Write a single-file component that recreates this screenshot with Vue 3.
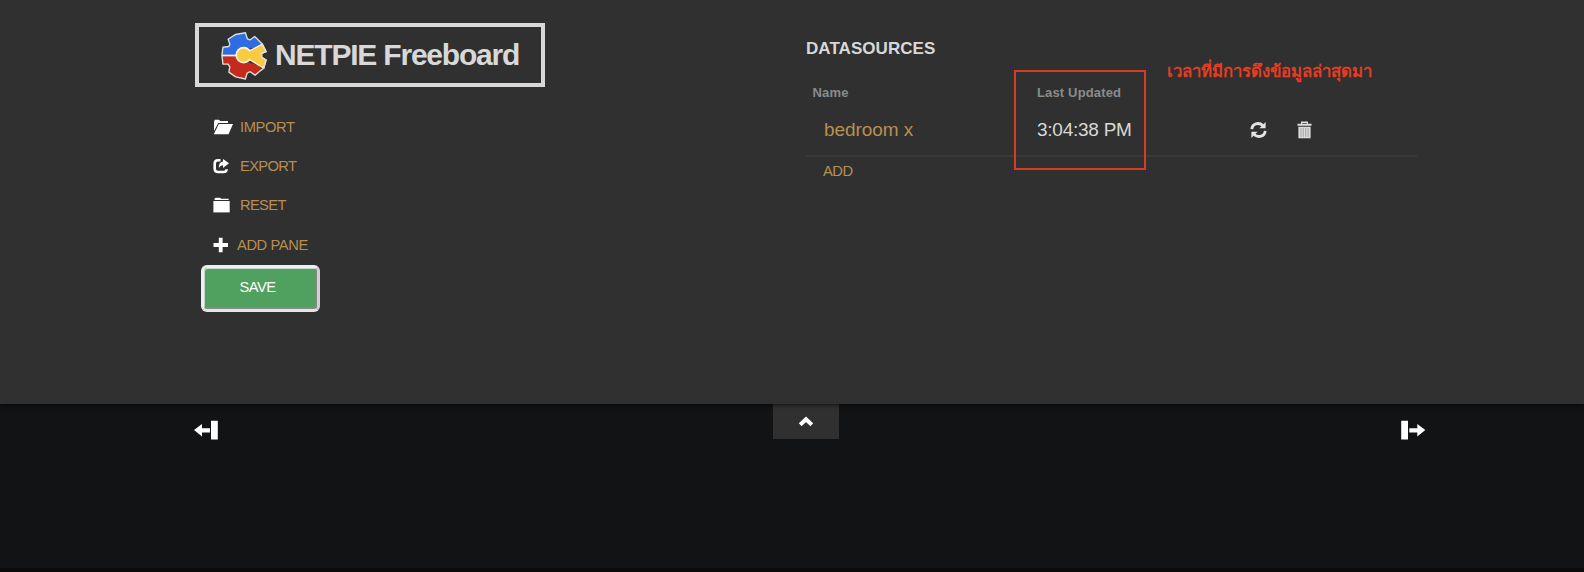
<script setup>
const menu = [
  { label: 'IMPORT', icon: 'open' },
  { label: 'EXPORT', icon: 'share' },
  { label: 'RESET', icon: 'folder' },
  { label: 'ADD PANE', icon: 'plus' },
]
</script>

<template>
  <div class="page">
    <header class="panel">
      <section class="left">
        <h1 class="logo">
          <svg class="gear" viewBox="35 19 138 142">
            <path d="M40 89L43 66L60 64L63 57L58 43L80 29L108 24L114 42L121 45L135 35L157 57L148 66L103 72V89Z" fill="#2c6ce4" />
            <path d="M40 91L43 115L58 115L63 123L60 138L80 152L108 158L113 141L122 137L136 147L155 130L146 118L103 106V91Z" fill="#c42b1e" />
            <path d="M40 90H84" stroke="#f3f3f5" stroke-width="5" />
            <circle cx="103" cy="89" r="24" fill="#fff6df" />
            <path d="M119 77L157 57L168 79L155 84V95L168 103L161 127L119 101Z" fill="#f9cb43" stroke="#fff6df" stroke-width="4" />
            <circle cx="103" cy="89" r="19" fill="#f9cb43" />
            <path d="M112 79L130 80V98L112 99Z" fill="#f9cb43" />
            <path class="rim" d="M40 89L43 66L60 64L63 57L58 43L80 29L108 24L114 42L121 45L135 35L157 57L168 79L155 84V95L168 103L161 127L153 133L136 147L122 137L113 141L108 158L80 152L60 138L63 123L58 115L43 115Z" />
          </svg>
          <span>NETPIE Freeboard</span>
        </h1>
        <ul class="menu">
          <li v-for="m in menu" :key="m.label" :class="m.icon">
            <svg class="ico" viewBox="0 0 20 16">
              <g v-if="m.icon === 'open'">
                <path d="M1 12V2.2L2 .8H6L7.2 2H15V4H5.2Z" />
                <path d="M5.8 5H20L15.5 15.3H.8Z" />
              </g>
              <g v-else-if="m.icon === 'share'">
                <path d="M7.5 2.2H5Q1.7 2.2 1.7 5.5V11Q1.7 14 5 14H10.5Q13.6 14 13.6 11.2" fill="none" stroke="#fff" stroke-width="2.6" />
                <path d="M10 1L16 5.3L10 10V7.3Q7.2 7.2 5.8 10Q5.7 3.8 10 3.6Z" />
              </g>
              <g v-else-if="m.icon === 'folder'">
                <path d="M1.5 3V1.8L2.6.8H7L8.2 1.8H15.6V3Z" />
                <path d="M.4 4H16.7V15.4H.4Z" />
              </g>
              <path v-else d="M5.8.8H9.6V6H15V9.9H9.6V15.3H5.8V9.9H.5V6H5.8Z" />
            </svg>
            <span>{{ m.label }}</span>
          </li>
        </ul>
        <button class="save">SAVE</button>
      </section>

      <section class="right">
        <h2>DATASOURCES</h2>
        <div class="row head"><span>Name</span><span class="updated">Last Updated</span></div>
        <div class="row item">
          <span class="name">bedroom x</span>
          <span class="time">3:04:38 PM</span>
          <span class="tools">
            <svg width="17" height="18" viewBox="0 0 17 18">
              <g fill="none" stroke="#e4e4e4" stroke-width="2.8">
                <path d="M1.8 8.2C2.2 2.3 8.8.9 13 4.5" />
                <path d="M15.2 9.8C14.8 15.7 8.2 17.1 4 13.5" />
              </g>
              <path d="M15.6 1V7.2H9.4ZM1.4 17V10.8H7.6Z" fill="#e4e4e4" />
            </svg>
            <svg width="15" height="18" viewBox="0 0 16 19">
              <path d="M5 3V1.2H11V3" fill="none" stroke="#ddd" stroke-width="1.5" />
              <path d="M.5 2.9H15.5V5H.5ZM1.5 6H14.5V18.2H1.5Z" fill="#ddd" />
              <path d="M4.2 7.2V17M6.7 7.2V17M9.3 7.2V17M11.8 7.2V17" stroke="#999" stroke-width=".9" />
            </svg>
          </span>
        </div>
        <div class="add">ADD</div>
      </section>
      <div class="highlight"></div>
      <div class="note">เวลาที่มีการดึงข้อมูลล่าสุดมา</div>
    </header>

    <nav class="bar">
      <svg width="26" height="20" viewBox="0 0 26 20">
        <path d="M0 10L8 4V8.2H16V12.4H8V16.5ZM17 .7H23.8V19.6H17Z" />
      </svg>
      <div class="tab">
        <svg width="16" height="12" viewBox="0 0 16 12">
          <path d="M2.2 8.8L8 3.3L13.8 8.8" fill="none" stroke="#fff" stroke-width="4" />
        </svg>
      </div>
      <svg width="26" height="20" viewBox="0 0 26 20">
        <path d="M1.2 .7H8V19.6H1.2ZM9.3 8.2H17.3V4L25.3 10L17.3 16.5V12.4H9.3Z" />
      </svg>
    </nav>
  </div>
</template>

<style>
body { margin: 0; background: #111314; }
</style>

<style scoped>
.page { box-sizing: border-box; height: 572px; background: #111314; border-bottom: 4px solid #0d0a0b; font-family: "Liberation Sans", Arial, sans-serif; overflow: hidden; }
.panel { position: relative; display: flex; box-sizing: border-box; height: 404px; padding: 23px 167px 0 195px; background: #303030; box-shadow: 0 1px 4px rgba(0, 0, 0, .65); }
.left { width: 611px; }
.logo { display: flex; align-items: center; box-sizing: border-box; width: 350px; height: 64px; margin: 0; padding-left: 21px; border: 4px solid #d8d8d8; color: #d8d8d8; font-size: 30px; line-height: 56px; letter-spacing: -1.2px; white-space: nowrap; }
.gear { width: 48px; height: 49px; margin-right: 7px; margin-top: 1px; }
.logo span { margin-top: -1px; }
.rim { fill: none; stroke: #deded9; stroke-width: 4; stroke-linejoin: round; }
.menu { margin: 20px 0 0; padding: 0 0 0 18px; list-style: none; }
.menu li { display: flex; align-items: center; height: 39.4px; color: #b88f51; font-size: 14.7px; letter-spacing: -.65px; }
.menu .open { letter-spacing: -.4px; }
.menu .plus { letter-spacing: -.4px; }
.ico { width: 20px; height: 16px; margin-right: 7px; fill: #fff; }
.menu .plus .ico { margin-right: 4px; }
.save { display: block; box-sizing: border-box; width: 119px; height: 47px; margin: 0 0 0 6px; padding: 0 6px 3px 0; border: 3px solid; border-color: #eee #d0d0d0 #e5e5e5 #eee; border-radius: 6px; background: #50a060; box-shadow: inset -1px -2px 0 #888, inset 1px 1px 0 #cbd8cd; color: #fff; font: 14.7px "Liberation Sans", Arial, sans-serif; letter-spacing: -.5px; }
.right { width: 611px; }
h2 { margin: 14px 0 0; color: #d8d8d8; font-size: 17px; line-height: 24px; letter-spacing: .05px; }
.row { display: flex; align-items: center; }
.head { height: 20px; margin-top: 21px; padding-left: 6.5px; color: #8b8b8b; font-size: 13px; font-weight: bold; letter-spacing: .15px; }
.head span:first-child { width: 224.5px; }
.item { box-sizing: border-box; height: 55px; padding-left: 18px; padding-top: 2px; border-bottom: 2px solid #393939; font-size: 19px; color: #d8d8d8; }
.name { width: 213px; color: #b88f51; letter-spacing: -.05px; }
.time { width: 213px; letter-spacing: -.25px; }
.tools { display: flex; align-items: center; gap: 30px; }
.add { padding-left: 17px; line-height: 29px; color: #b88f51; font-size: 14.7px; letter-spacing: -.5px; }
.highlight { position: absolute; left: 1014px; top: 70px; box-sizing: border-box; width: 132px; height: 100px; border: 2px solid #d83c20; }
.note { position: absolute; left: 1167px; top: 59px; color: #e33d22; font-size: 16.7px; line-height: 26px; font-weight: bold; white-space: nowrap; }
.bar { display: flex; justify-content: space-between; align-items: flex-start; padding: 0 158px 0 194px; fill: #fff; }
.bar > svg { margin-top: 16px; }
.tab { display: flex; justify-content: center; box-sizing: border-box; width: 66px; height: 35px; margin-right: 9px; padding-top: 12px; background: #303030; }
</style>
